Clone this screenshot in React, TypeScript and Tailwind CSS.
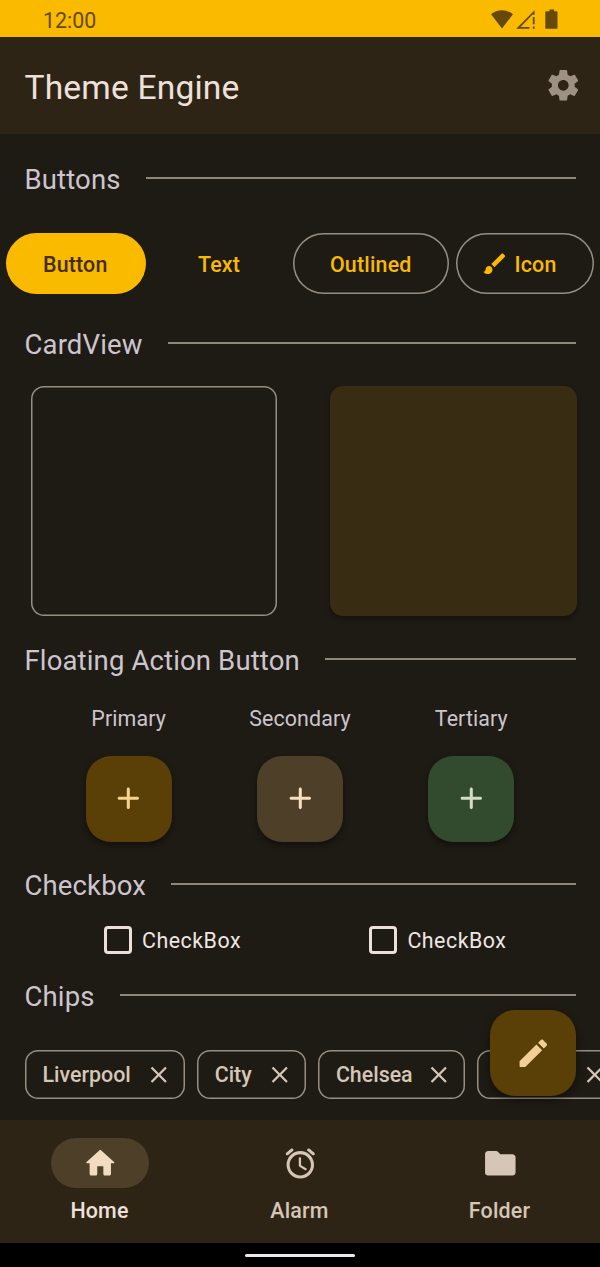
import type { ReactNode } from 'react';
import { MdBrush, MdClose } from 'react-icons/md';

const SETTINGS =
  'M19.43 12.98c.04-.32.07-.64.07-.98s-.03-.66-.07-.98l2.11-1.65c.19-.15.24-.42.12-.64l-2-3.46c-.12-.22-.39-.3-.61-.22l-2.49 1c-.52-.4-1.08-.73-1.69-.98l-.38-2.65C14.46 2.18 14.25 2 14 2h-4c-.25 0-.46.18-.49.42l-.38 2.65c-.61.25-1.17.59-1.69.98l-2.49-1c-.23-.09-.49 0-.61.22l-2 3.46c-.13.22-.07.49.12.64l2.11 1.65c-.04.32-.07.65-.07.98s.03.66.07.98l-2.11 1.65c-.19.15-.24.42-.12.64l2 3.46c.12.22.39.3.61.22l2.49-1c.52.4 1.08.73 1.69.98l.38 2.65c.03.24.24.42.49.42h4c.25 0 .46-.18.49-.42l.38-2.65c.61-.25 1.17-.59 1.69-.98l2.49 1c.23.09.49 0 .61-.22l2-3.46c.12-.22.07-.49-.12-.64l-2.11-1.65zM12 15.5c-1.93 0-3.5-1.57-3.5-3.5s1.57-3.5 3.5-3.5 3.5 1.57 3.5 3.5-1.57 3.5-3.5 3.5z';
const ADD =
  'M18 13h-5v5c0 .55-.45 1-1 1s-1-.45-1-1v-5H6c-.55 0-1-.45-1-1s.45-1 1-1h5V6c0-.55.45-1 1-1s1 .45 1 1v5h5c.55 0 1 .45 1 1s-.45 1-1 1z';
const EDIT =
  'M3 17.46v3.04c0 .28.22.5.5.5h3.04c.13 0 .26-.05.35-.15L17.81 9.94l-3.75-3.75L3.15 17.1c-.1.1-.15.22-.15.36zM20.71 7.04c.39-.39.39-1.02 0-1.41l-2.34-2.34c-.39-.39-1.02-.39-1.41 0l-1.83 1.83 3.75 3.75 1.83-1.83z';
const HOME =
  'M10 19v-5h4v5c0 .55.45 1 1 1h3c.55 0 1-.45 1-1v-7h1.7c.46 0 .68-.57.33-.87L12.67 3.6c-.38-.34-.96-.34-1.34 0l-8.36 7.53c-.34.3-.13.87.33.87H5v7c0 .55.45 1 1 1h3c.55 0 1-.45 1-1z';
const ALARM =
  'M15.87 15.25l-3.37-2V8.72c0-.4-.32-.72-.72-.72h-.06c-.4 0-.72.32-.72.72v4.72c0 .35.18.68.49.86l3.65 2.19c.34.2.78.1.98-.24.21-.35.1-.8-.25-1zm5.31-10.24L18.1 2.45c-.42-.35-1.05-.3-1.41.13-.35.42-.29 1.05.13 1.41l3.07 2.56c.42.35 1.05.3 1.41-.13.36-.42.3-1.05-.12-1.41zM4.1 6.55l3.07-2.56c.43-.36.49-.99.13-1.41-.35-.43-.98-.48-1.4-.13L2.82 5.01c-.42.36-.48.99-.12 1.41.35.43.98.48 1.4.13zM12 4c-4.97 0-9 4.03-9 9s4.03 9 9 9 9-4.03 9-9-4.03-9-9-9zm0 16c-3.86 0-7-3.14-7-7s3.14-7 7-7 7 3.14 7 7-3.14 7-7 7z';
const FOLDER =
  'M10.59 4.59C10.21 4.21 9.7 4 9.17 4H4c-1.1 0-1.99.9-1.99 2L2 18c0 1.1.9 2 2 2h16c1.1 0 2-.9 2-2V8c0-1.1-.9-2-2-2h-8l-1.41-1.41z';

function Icon({ d, className = '' }: { d: string; className?: string }) {
  return (
    <svg viewBox="0 0 24 24" fill="currentColor" className={`size-[36.6px] shrink-0 ${className}`}>
      <path d={d} />
    </svg>
  );
}

function StatusBar() {
  return (
    <div className="flex h-[37px] shrink-0 items-center bg-[#f9ba00] pr-[41px] pl-[43px] text-[#66490a]">
      <span className="mt-[4px] flex-1 text-[21.4px] leading-[26px]">12:00</span>
      <svg width="70" height="24" viewBox="0 0 70 24" fill="currentColor" className="mt-[1px]">
        <path d="M2 7.2C8.5 1.8 17.5 1.8 24 7.2L13 21.5z" />
        <path d="M45.6 3.2v4.6h-1.8v-.6L31.6 20h8.9v1.8H27.2zM43.8 10h1.8v7.3h-1.8zM43.8 19.6h1.8v2.2h-1.8z" />
        <path d="M60.5 2.5h4.6v1.7h2.5c.5 0 .9.4.9.9v15.8c0 .5-.4.9-.9.9H57.2c-.5 0-.9-.4-.9-.9V5.1c0-.5.4-.9.9-.9h3.3z" />
      </svg>
    </div>
  );
}

function SectionTitle({ children }: { children: ReactNode }) {
  return (
    <div className="flex h-9 items-center gap-[25px] px-[24.5px] text-[27.5px] tracking-[0.14px] text-[#cdc5ce]">
      <h2 className="mt-[4px] leading-9 whitespace-nowrap">{children}</h2>
      <div className="h-[2px] flex-1 bg-[#90877b]" />
    </div>
  );
}

const fabs = [
  { name: 'Primary', color: 'bg-[#5a3f07] text-[#f6d291]' },
  { name: 'Secondary', color: 'bg-[#4e3f29] text-[#f5dfc0]' },
  { name: 'Tertiary', color: 'bg-[#324a2d] text-[#d3dcc6]' },
];

const chips = [
  { name: 'Liverpool', width: 'w-[160px]' },
  { name: 'City', width: 'w-[109px]' },
  { name: 'Chelsea', width: 'w-[147px]' },
  { name: 'Arsenal', width: 'w-[144px]' },
];

const tabs = [
  { name: 'Home', icon: HOME, active: true },
  { name: 'Alarm', icon: ALARM, active: false },
  { name: 'Folder', icon: FOLDER, active: false },
];

export default function App() {
  return (
    <div className="relative flex h-[1267px] w-[600px] flex-col overflow-hidden bg-[#1e1a14] font-[Roboto,sans-serif] text-[21.4px]">
      <StatusBar />
      <header className="flex h-[97px] shrink-0 items-center justify-between bg-[#2e2415] pr-[18.5px] pl-[24.5px] text-[#eee0da]">
        <h1 className="mt-[4px] text-[33.6px] leading-10 tracking-[0.17px]">Theme Engine</h1>
        <Icon d={SETTINGS} className="text-[#9c9182]" />
      </header>

      <main className="flex flex-1 flex-col overflow-hidden pt-[26px]">
        <SectionTitle>Buttons</SectionTitle>
        <div className="mt-[37px] flex h-[61px] px-[6px] font-medium tracking-[0.2px] text-[#f9ba00]">
          <button className="w-[139.5px] rounded-full bg-[#f9ba00] pt-[3px] pr-[1px] text-[#432d05]">Button</button>
          <button className="w-[147px] pt-[3px]">Text</button>
          <button className="w-[156.5px] rounded-full pt-[3px] shadow-[inset_0_0_0_1.5px_#978e80]">Outlined</button>
          <button className="ml-[7px] flex w-[138px] items-center rounded-full pl-[25px] shadow-[inset_0_0_0_1.5px_#978e80]">
            <MdBrush className="size-[27.5px]" />
            <span className="mt-[3px] ml-[6px]">Icon</span>
          </button>
        </div>

        <div className="mt-[31px]">
          <SectionTitle>CardView</SectionTitle>
        </div>
        <div className="mt-[25px] flex h-[229.5px] justify-between pr-[23px] pl-[30.5px]">
          <div className="w-[246.5px] rounded-[13px] shadow-[inset_0_0_0_1.5px_#978e80]" />
          <div className="w-[247px] rounded-[13px] bg-[#382c12] shadow-[0_3px_5px_rgba(0,0,0,0.3)]" />
        </div>

        <div className="mt-[25.5px]">
          <SectionTitle>Floating Action Button</SectionTitle>
        </div>
        <div className="mt-[27px] grid grid-cols-3 px-[43px]">
          {fabs.map((fab) => (
            <div key={fab.name} className="flex flex-col items-center">
              <span className="mt-[1px] leading-[27px] tracking-[0.1px] text-[#cdc5ce]">{fab.name}</span>
              <button
                className={`mt-[23.5px] flex size-[86px] items-center justify-center rounded-[25px] shadow-[0_3px_6px_rgba(0,0,0,0.4)] ${fab.color}`}
              >
                <Icon d={ADD} />
              </button>
            </div>
          ))}
        </div>

        <div className="mt-[24.5px]">
          <SectionTitle>Checkbox</SectionTitle>
        </div>
        <div className="mt-[24px] flex pl-[104px] text-[#eee6e2]">
          {['first', 'second'].map((id) => (
            <label key={id} className="flex w-[265.4px] shrink-0 items-center">
              <span className="size-[28px] rounded-[4px] border-[3px] border-[#ede0d9]" />
              <span className="mt-[2px] ml-[10px] leading-[26px] tracking-[0.5px]">CheckBox</span>
            </label>
          ))}
        </div>

        <div className="mt-[23px]">
          <SectionTitle>Chips</SectionTitle>
        </div>
        <div className="mt-[37px] flex h-[49px] shrink-0 gap-[12.2px] pl-[24.5px] font-medium text-[#d5c6b6]">
          {chips.map((chip) => (
            <div
              key={chip.name}
              className={`flex shrink-0 items-center justify-between rounded-[13px] pr-[12.5px] pl-[18px] shadow-[inset_0_0_0_1.5px_#978e80] ${chip.width}`}
            >
              <span className="mt-[2px]">{chip.name}</span>
              <MdClose className="size-[27.5px]" />
            </div>
          ))}
        </div>
      </main>

      <button className="absolute top-[1010px] left-[490px] flex size-[86px] items-center justify-center rounded-[25px] bg-[#5a3f07] text-[#f3cf95] shadow-[0_4px_8px_rgba(0,0,0,0.4)]">
        <Icon d={EDIT} />
      </button>

      <nav className="flex h-[123px] shrink-0 bg-[#2e2415] pt-[18px]">
        {tabs.map((tab) => (
          <button key={tab.name} className="flex flex-1 flex-col items-center text-[#d5c6b6]">
            <span
              className={
                tab.active
                  ? 'flex h-[50px] w-[98px] items-center justify-center rounded-full bg-[#4e3f29] text-[#f1dcc2]'
                  : 'flex h-[50px] w-[98px] items-center justify-center'
              }
            >
              <Icon d={tab.icon} />
            </span>
            <span
              className={
                tab.active
                  ? 'mt-[10px] pr-[1px] leading-[26px] font-medium tracking-[0.2px] text-[#eee0da]'
                  : 'mt-[10px] pr-[1px] leading-[26px] font-medium tracking-[0.2px]'
              }
            >
              {tab.name}
            </span>
          </button>
        ))}
      </nav>
      <div className="flex h-[24px] shrink-0 items-center justify-center bg-black">
        <div className="mt-[1px] h-[3px] w-[110px] rounded-full bg-[#eee8ee]" />
      </div>
    </div>
  );
}
